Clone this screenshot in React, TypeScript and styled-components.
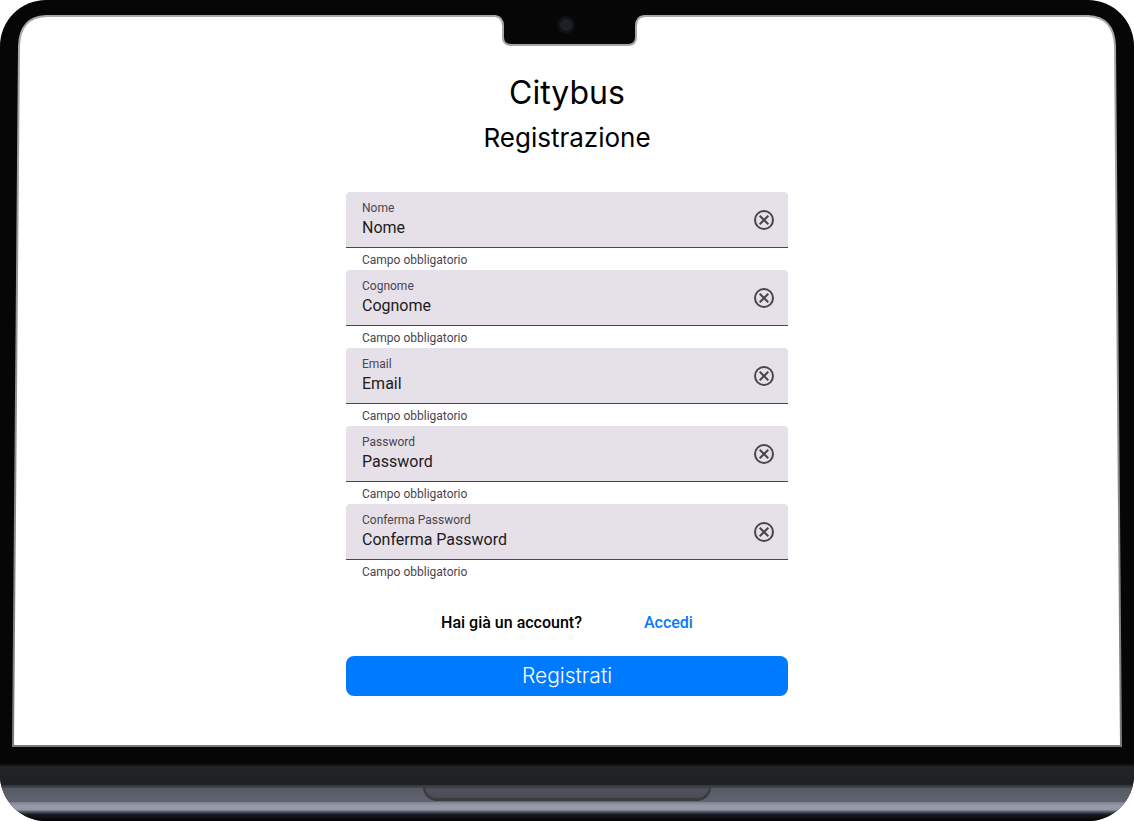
import React, { useId, useState } from 'react';
import styled, { createGlobalStyle } from 'styled-components';

const GlobalStyle = createGlobalStyle`
  *, *::before, *::after { box-sizing: border-box; }
  body {
    margin: 0;
    background: #ffffff;
    color: #000000;
    font-family: Inter, 'Liberation Sans', sans-serif;
  }
`;

const Laptop = styled.div`
  display: flex;
  flex-direction: column;
  min-height: 100vh;
  border-radius: 46px;
  overflow: hidden;
  background: #060606;
`;

const Display = styled.div`
  position: relative;
  flex: 1;
  display: flex;
  justify-content: center;
  padding: 72px 24px 64px;
`;

const BezelArt = styled.svg`
  position: absolute;
  inset: 0;
  width: 100%;
  height: 100%;
`;

const Base = styled.div`
  display: flex;
  flex-direction: column;
  height: 57px;
  background: linear-gradient(
    #111215 0, #111215 2px,
    #222327 2px, #202125 21px,
    #34363b 21px, #45484f 24px,
    #565a65 24px, #606470 38px,
    #7e8290 38px, #989caa 42px, #9297a4 46px,
    #626774 47px, #3a3e48 49px,
    #191d24 50px, #0c0f13 54px, #000000 57px
  );
`;

const LidGroove = styled.div`
  width: 288px;
  height: 16px;
  margin: 21px auto 0;
  border: 2px solid #393b41;
  border-top-width: 1px;
  border-bottom-width: 3px;
  border-radius: 0 0 14px 14px;
  background: linear-gradient(#393b41, #50535d 4px, #484b54);
`;

const Page = styled.main`
  position: relative;
  width: 100%;
  max-width: 442px;
`;

const Title = styled.h1`
  margin: 0;
  font-size: 32px;
  font-weight: 400;
  line-height: 42px;
  text-align: center;
`;

const Subtitle = styled.h2`
  margin: 6px 0 36px;
  font-size: 26px;
  font-weight: 400;
  line-height: 36px;
  text-align: center;
`;

const Form = styled.form`
  display: flex;
  flex-direction: column;
`;

const Fields = styled.div`
  display: flex;
  flex-direction: column;
  gap: 2px;
  font-family: Roboto, 'Liberation Sans', sans-serif;
`;

const FieldBox = styled.div`
  display: flex;
  align-items: center;
  height: 56px;
  padding: 0 12px 0 16px;
  border-bottom: 1px solid #49454f;
  border-radius: 4px 4px 0 0;
  background: #e6e0e9;
`;

const FieldText = styled.div`
  flex: 1;
  display: flex;
  flex-direction: column;
`;

const Label = styled.label`
  color: #49454f;
  font-size: 12px;
  line-height: 16px;
`;

const Input = styled.input`
  width: 100%;
  height: 24px;
  padding: 0;
  border: 0;
  outline: 0;
  background: transparent;
  color: #1d1b20;
  font: 400 16px/24px Roboto, 'Liberation Sans', sans-serif;
`;

const ClearButton = styled.button`
  display: flex;
  padding: 0;
  border: 0;
  background: transparent;
  color: #49454f;
  cursor: pointer;
`;

const Hint = styled.p`
  margin: 4px 16px 0;
  color: #49454f;
  font-size: 12px;
  line-height: 16px;
`;

const LoginRow = styled.p`
  display: flex;
  justify-content: center;
  gap: 62px;
  margin: 31px 0 21px;
  font: 500 16px/24px Roboto, 'Liberation Sans', sans-serif;
`;

const LoginLink = styled.a`
  color: #007aff;
  text-decoration: none;
`;

const SubmitButton = styled.button`
  height: 40px;
  border: 0;
  border-radius: 8px;
  background: #007aff;
  color: #ffffff;
  font: 300 21px/24px Inter, 'Liberation Sans', sans-serif;
  cursor: pointer;
`;

function Bezel() {
  return (
    <BezelArt viewBox="0 0 1134 764" preserveAspectRatio="none" aria-hidden="true">
      <defs>
        <linearGradient id="edge" x1="0" y1="0" x2="0" y2="1">
          <stop offset="0" stopColor="#a8a8a8" />
          <stop offset="1" stopColor="#7a7a7a" />
        </linearGradient>
      </defs>
      <path
        d="M13 746 L19 46 Q20 17 46 16 H495 Q503 17 503 26 V37 Q503 45 511 45 H628 Q636 45 636 37 V26 Q636 17 644 16 H1088 Q1114 17 1115 46 L1121 746 Z"
        fill="#ffffff"
        stroke="url(#edge)"
        strokeWidth="2"
      />
      <circle cx="566" cy="25" r="9" fill="#101115" />
      <circle cx="566" cy="25" r="6" fill="#1e2027" />
    </BezelArt>
  );
}

function ClearIcon() {
  return (
    <svg width="24" height="24" viewBox="0 0 24 24" fill="none" stroke="currentColor" strokeWidth="2" aria-hidden="true">
      <circle cx="12" cy="12" r="9" />
      <path d="M7.7 7.7 L16.3 16.3 M16.3 7.7 L7.7 16.3" />
    </svg>
  );
}

function Field({ label }: { label: string }) {
  const id = useId();
  const [value, setValue] = useState(label);
  return (
    <div>
      <FieldBox>
        <FieldText>
          <Label htmlFor={id}>{label}</Label>
          <Input id={id} value={value} onChange={(e) => setValue(e.target.value)} />
        </FieldText>
        <ClearButton type="button" aria-label={`Cancella ${label}`} onClick={() => setValue('')}>
          <ClearIcon />
        </ClearButton>
      </FieldBox>
      <Hint>Campo obbligatorio</Hint>
    </div>
  );
}

const fields = ['Nome', 'Cognome', 'Email', 'Password', 'Conferma Password'];

export default function App() {
  return (
    <>
      <GlobalStyle />
      <Laptop>
        <Display>
          <Bezel />
          <Page>
            <Title>Citybus</Title>
            <Subtitle>Registrazione</Subtitle>
            <Form onSubmit={(e) => e.preventDefault()}>
              <Fields>
                {fields.map((label) => (
                  <Field key={label} label={label} />
                ))}
              </Fields>
              <LoginRow>
                <span>Hai già un account?</span>
                <LoginLink href="#accedi">Accedi</LoginLink>
              </LoginRow>
              <SubmitButton type="submit">Registrati</SubmitButton>
            </Form>
          </Page>
        </Display>
        <Base>
          <LidGroove />
        </Base>
      </Laptop>
    </>
  );
}
